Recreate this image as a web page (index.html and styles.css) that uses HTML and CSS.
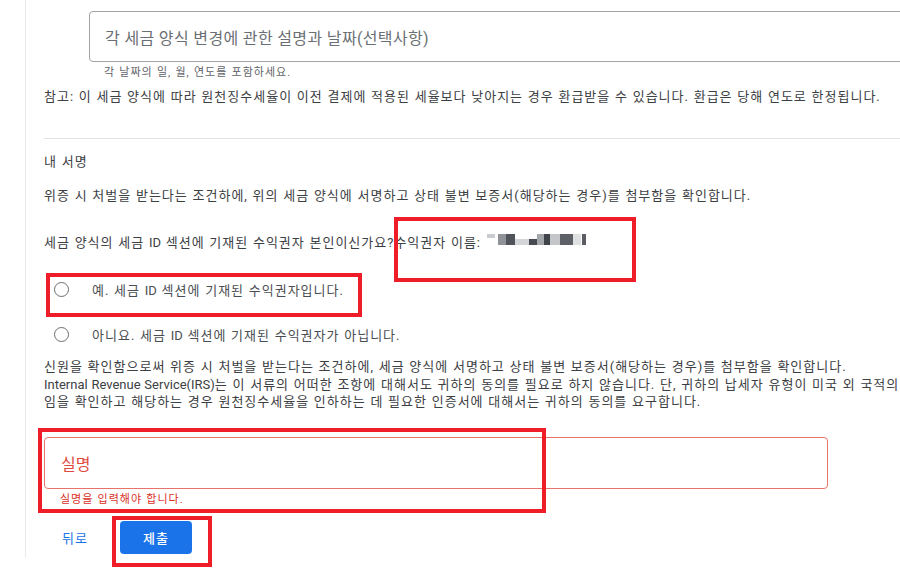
FILE: index.html
```html
<!DOCTYPE html>
<html lang="ko">
<head>
<meta charset="utf-8">
<link rel="stylesheet" href="styles.css">
</head>
<body>
<div class="page">
  <div class="card">
    <div class="field field-top">
      <span class="placeholder top-ph">각 세금 양식 변경에 관한 설명과 날짜(선택사항)</span>
    </div>
    <div class="hint">각 날짜의 일, 월, 연도를 포함하세요.</div>
    <p class="text note">참고: 이 세금 양식에 따라 원천징수세율이 이전 결제에 적용된 세율보다 낮아지는 경우 환급받을 수 있습니다. 환급은 당해 연도로 한정됩니다.</p>
    <div class="divider"></div>
    <p class="text title">내 서명</p>
    <p class="text perjury">위증 시 처벌을 받는다는 조건하에, 위의 세금 양식에 서명하고 상태 불변 보증서(해당하는 경우)를 첨부함을 확인합니다.</p>
    <div class="text question"><span class="q-text">세금 양식의 세금 <span class="lat">ID</span> 섹션에 기재된 수익권자 본인이신가요?수익권자 이름:</span><span class="blur"><i class="b1"></i><i class="b2"></i><i class="b3"></i><i class="b4"></i><i class="b5"></i><i class="b6"></i><i class="b7"></i><i class="b8"></i><i class="b9"></i><i class="b10"></i><i class="b11"></i><i class="b12"></i><i class="b13"></i></span></div>
    <div class="radio-row first">
      <span class="radio"></span>
      <span class="radio-label">예. 세금 <span class="lat">ID</span> 섹션에 기재된 수익권자입니다.</span>
    </div>
    <div class="radio-row second">
      <span class="radio"></span>
      <span class="radio-label">아니요. 세금 <span class="lat">ID</span> 섹션에 기재된 수익권자가 아닙니다.</span>
    </div>
    <p class="text consent">신원을 확인함으로써 위증 시 처벌을 받는다는 조건하에, 세금 양식에 서명하고 상태 불변 보증서(해당하는 경우)를 첨부함을 확인합니다.<br><span class="lat">Internal Revenue Service(IRS)</span>는 이 서류의 어떠한 조항에 대해서도 귀하의 동의를 필요로 하지 않습니다. 단, 귀하의 납세자 유형이 미국 외 국적의<br>임을 확인하고 해당하는 경우 원천징수세율을 인하하는 데 필요한 인증서에 대해서는 귀하의 동의를 요구합니다.</p>
    <div class="field field-error">
      <span class="placeholder error-ph">실명</span>
    </div>
    <div class="error-text">실명을 입력해야 합니다.</div>
    <div class="actions">
      <span class="back">뒤로</span>
      <span class="submit">제출</span>
    </div>
  </div>
  <div class="mark mark-name"></div>
  <div class="mark mark-yes"></div>
  <div class="mark mark-field"></div>
  <div class="mark mark-submit"></div>
</div>
</body>
</html>
```
FILE: styles.css
```css
html, body {
  margin: 0;
  padding: 0;
  background: #fff;
  overflow: hidden;
}
body {
  font-family: Roboto, "Noto Sans CJK KR", sans-serif;
  color: #3c4043;
  width: 900px;
  height: 578px;
}
.page {
  position: relative;
  width: 900px;
  height: 578px;
  overflow: hidden;
}
.card {
  margin-left: 25px;
  border-left: 1px solid #e8eaed;
  padding-left: 18px;
  padding-top: 11px;
  height: 547px;
}
.field {
  box-sizing: border-box;
  border-radius: 4px;
  display: flex;
  align-items: center;
}
.field-top {
  margin-left: 45px;
  width: 840px;
  height: 51px;
  border: 1px solid #a0a4a8;
  padding-left: 15px;
}
.placeholder {
  font-size: 16px;
  color: #6b6f73;
}
.top-ph { letter-spacing: 0.35px; }
.hint {
  margin-left: 60px;
  margin-top: 4px;
  font-size: 11px;
  line-height: 14px;
  color: #5f6368;
  letter-spacing: 1px;
  word-spacing: 0.5px;
}
.text {
  margin: 0;
  font-size: 13px;
  line-height: 18px;
  white-space: nowrap;
  letter-spacing: 1px;
  word-spacing: 0.5px;
}
.lat {
  letter-spacing: 0;
}
.note { margin-top: 8px; }
.divider {
  margin-top: 32px;
  height: 1px;
  background: #e3e3e3;
  margin-right: -40px;
}
.title { margin-top: 14px; }
.perjury { margin-top: 16px; }
.question {
  margin-top: 29px;
  display: flex;
  align-items: center;
}
.blur {
  display: flex;
  align-items: flex-start;
  margin-left: 6px;
  height: 12px;
  margin-top: -6px;
}
.blur i { display: block; height: 11px; }
.b1 { width: 8px; background: #c9cbce; height: 4px !important; }
.b2 { width: 3px; background: #ffffff; }
.b3 { width: 8px; background: #8f9398; }
.b4 { width: 9px; background: #50545a; }
.b5 { width: 14px; background: #d3d5d8; margin-top: 5px; height: 6px !important; }
.b6 { width: 8px; background: #474b51; margin-top: 5px; height: 6px !important; }
.b7 { width: 7px; background: #a3a6aa; }
.b8 { width: 6px; background: #3f434a; }
.b9 { width: 10px; background: #c4c6c9; }
.b10 { width: 13px; background: #5d6167; }
.b11 { width: 8px; background: #dfe0e2; }
.b12 { width: 1px; background: #fff; }
.b13 { width: 4px; background: #5a5e64; }
.radio-row {
  display: flex;
  align-items: center;
  height: 24px;
}
.radio-row.first { margin-top: 25px; }
.radio-row.second { margin-top: 21px; }
.radio {
  box-sizing: border-box;
  width: 15px;
  height: 15px;
  border: 1.5px solid #6b6f73;
  border-radius: 50%;
  margin-left: 10px;
  flex: none;
}
.radio-label {
  margin-left: 23px;
  font-size: 13px;
  color: #4a4e52;
  letter-spacing: 1px;
  word-spacing: 0.5px;
}
.consent {
  margin-top: 12px;
  line-height: 17.5px;
}
.field-error {
  margin-top: 26px;
  width: 784px;
  height: 52px;
  border: 1px solid #e8736b;
  padding-left: 16px;
}
.error-ph { color: #df4a40; }
.error-text {
  margin-top: 4px;
  margin-left: 16px;
  font-size: 11px;
  line-height: 14px;
  color: #d93025;
  letter-spacing: 1px;
  word-spacing: 0.5px;
}
.actions {
  margin-top: 14px;
  display: flex;
  align-items: center;
  gap: 14px;
}
.back {
  width: 62px;
  text-align: center;
  font-size: 13px;
  letter-spacing: 1px;
  color: #1a73e8;
}
.submit {
  width: 72px;
  height: 33px;
  border-radius: 4px;
  background: #1a73e8;
  color: #fff;
  font-size: 13px;
  font-weight: 500;
  letter-spacing: 1px;
  display: flex;
  align-items: center;
  justify-content: center;
}
.mark {
  position: absolute;
  border: 4px solid #ee1d27;
  box-sizing: border-box;
}
.mark-name { left: 394px; top: 217px; width: 242px; height: 65px; }
.mark-yes { left: 46px; top: 273px; width: 316px; height: 44px; }
.mark-field { left: 38px; top: 428px; width: 508px; height: 85px; }
.mark-submit { left: 112px; top: 516px; width: 100px; height: 51px; }
```
